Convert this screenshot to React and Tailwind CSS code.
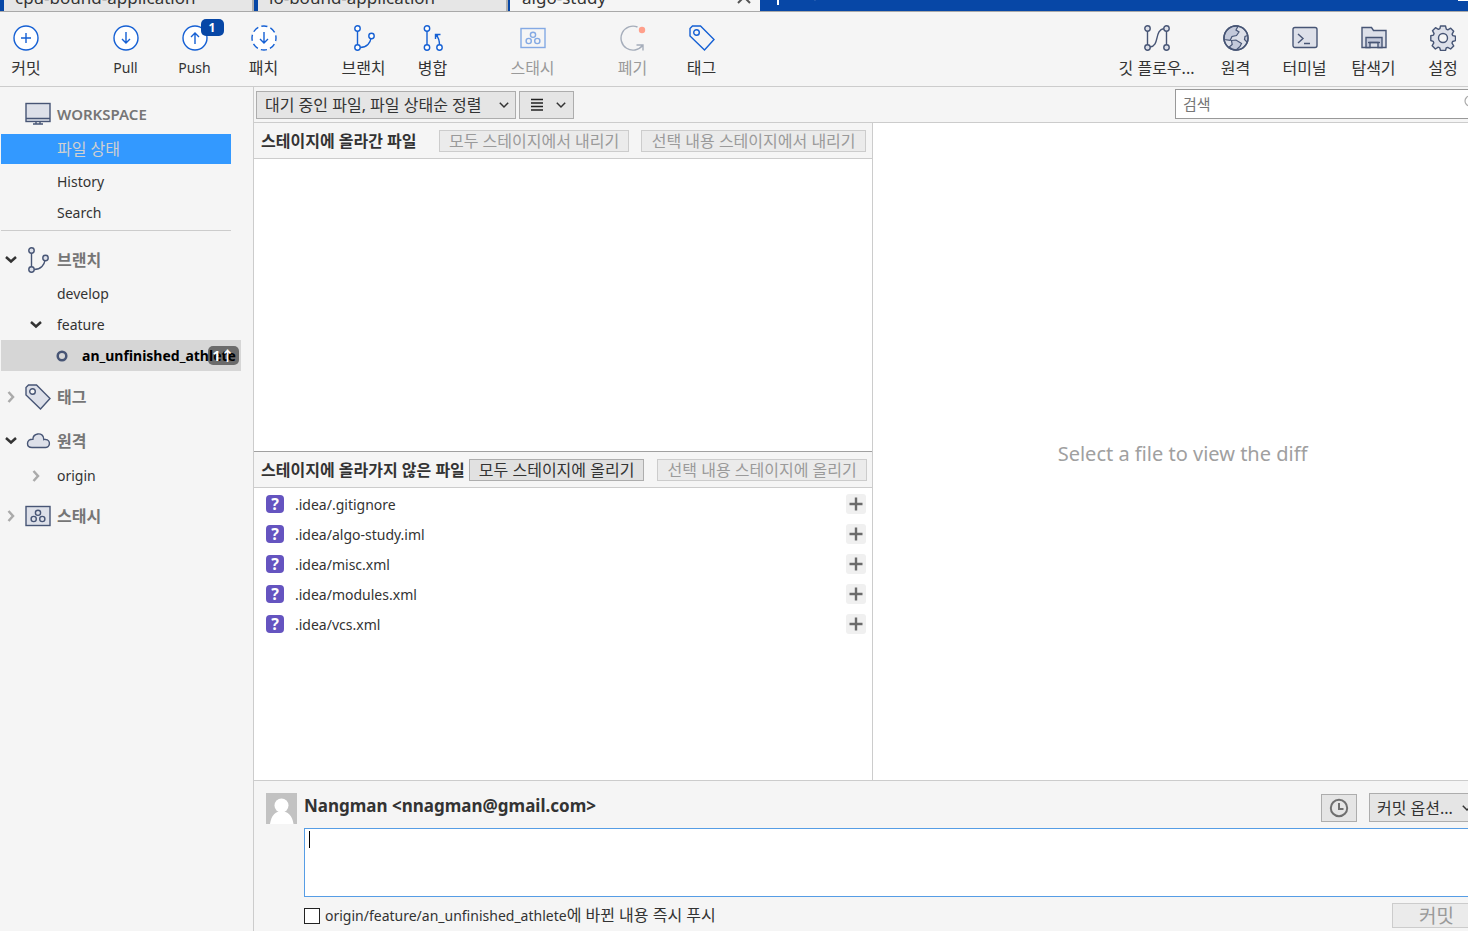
import React from "react";

const NAVY = "#475575";
const FILL = "#dde0e9";

function Svg({ size = 26, children, className = "" }) {
  return (
    <svg
      width={size}
      height={size}
      viewBox={`0 0 ${size} ${size}`}
      fill="none"
      stroke="currentColor"
      strokeWidth="1.4"
      aria-hidden="true"
      className={`shrink-0 ${className}`}
    >
      {children}
    </svg>
  );
}

const CommitIcon = () => (
  <Svg>
    <circle cx="13" cy="13" r="12" fill="#fff" />
    <path d="M8 13h10M13 8v10" />
  </Svg>
);
const PullIcon = () => (
  <Svg>
    <circle cx="13" cy="13" r="12" fill="#fff" />
    <path d="M13 7v11M9 14l4 4 4-4" />
  </Svg>
);
const PushIcon = () => (
  <Svg>
    <circle cx="13" cy="13" r="12" fill="#fff" />
    <path d="M13 19V8M9 12l4-4 4 4" />
  </Svg>
);
const FetchIcon = () => (
  <Svg>
    <circle cx="13" cy="13" r="12" fill="#fff" strokeDasharray="6.2 3.225" strokeDashoffset="3.1" />
    <path d="M13 7v11M9 14l4 4 4-4" />
  </Svg>
);
const BranchIcon = ({ fill = "#fff" }) => (
  <Svg>
    <path d="M6.500 6v14M9 22.500c7 0 10.500-5 11-9.500" />
    <circle cx="6.500" cy="3.500" r="2.700" fill={fill} />
    <circle cx="6.500" cy="22.500" r="2.700" fill={fill} />
    <circle cx="20.500" cy="11" r="2.700" fill={fill} />
  </Svg>
);
const MergeIcon = () => (
  <Svg>
    <path d="M7 6v14M19.500 20c0-4-1-7.500-3.500-10.500M20.500 9.500h-5V14" />
    <path d="M15 9h4.500l-4.500 4.500z" fill="currentColor" stroke="none" />
    <circle cx="7" cy="3.500" r="2.700" fill="#fff" />
    <circle cx="7" cy="22.500" r="2.700" fill="#fff" />
    <circle cx="19.500" cy="22.500" r="2.700" fill="#fff" />
  </Svg>
);
const StashIcon = ({ fill = "none" }) => (
  <Svg>
    <rect x="1" y="3.500" width="24" height="19" fill={fill} />
    <circle cx="13" cy="9.800" r="2.600" />
    <circle cx="8.700" cy="16" r="2.600" />
    <circle cx="17.300" cy="16" r="2.600" />
  </Svg>
);
const DiscardIcon = () => (
  <Svg>
    <path d="M17.500 2A12 12 0 1 0 22.500 20.500M16.500 20h6.500v5.500" />
    <circle cx="22" cy="5" r="3.200" fill="#ff9f8b" stroke="none" />
  </Svg>
);
const TagIcon = ({ fill = "none" }) => (
  <Svg>
    <path d="M1 3.500L3.500 1h8L25 14.500 15.500 25 1 11z" fill={fill} />
    <circle cx="7.500" cy="7.500" r="2.800" fill="#f5f5f5" />
  </Svg>
);
const FlowIcon = () => (
  <Svg>
    <path d="M3.500 6v14M22.500 6v14M6 22c10-1 4-17 14-18.500" />
    <circle cx="3.500" cy="3.500" r="2.700" fill={FILL} />
    <circle cx="3.500" cy="22.500" r="2.700" fill={FILL} />
    <circle cx="22.500" cy="3.500" r="2.700" fill={FILL} />
    <circle cx="22.500" cy="22.500" r="2.700" fill={FILL} />
  </Svg>
);
const GlobeIcon = () => (
  <Svg>
    <circle cx="13" cy="13" r="12" fill={FILL} />
    <path
      d="M6 3.500C2 6.500.8 11 1.200 14.500l6 .8 1.800-3.800 4.500-1L16 7l-3-2 2-3.800C11.500.5 8.500 1.500 6 3.500z"
      fill="#c3c9da"
      strokeWidth="1.200"
    />
    <path
      d="M8.500 15.500L13 15l5.500 3.500-1.500 3-3.500 3.300c-3 .2-5.500-1-7.300-2.800l3-2.500z"
      fill="#c3c9da"
      strokeWidth="1.200"
    />
    <path d="M24.500 10.500l-2.500 1-.5 3 2.500 2.500" fill="#c3c9da" strokeWidth="1.200" />
    <circle cx="13" cy="13" r="12" />
  </Svg>
);
const TerminalIcon = () => (
  <Svg>
    <rect x="1" y="2.500" width="24" height="20" rx="2" fill={FILL} />
    <path d="M6 9l5 4.500L6 18M12 18.500h6" />
  </Svg>
);
const ExplorerIcon = () => (
  <Svg>
    <path d="M1 22.500v-20h9.500l2 3H25v17z" fill={FILL} />
    <path d="M5 22.500V12.500h16v10h-4v-5H9v5z" fill="#c3c9da" />
    <path d="M7 17.500h12" />
  </Svg>
);
const GearIcon = () => (
  <Svg>
    <path
      d="M10.500 1h5l.8 3.200 1.500.7 2.900-1.700 3 3-1.600 2.900.7 1.500 2.700.6v4.500l-2.900.8-.6 1.600 1.700 2.800-3.100 3.100-2.900-1.600-1.500.6-.7 2.500h-5l-.8-2.700-1.500-.6L5.400 24 2.200 20.700l1.600-2.800-.6-1.600L.8 15.500v-4.700l2.700-.7.6-1.500-1.600-2.900 3-3 2.900 1.600 1.500-.7z"
      fill={FILL}
      strokeLinejoin="round"
    />
    <circle cx="13" cy="13" r="4.500" fill="#f5f5f5" />
  </Svg>
);
const MonitorIcon = () => (
  <Svg>
    <rect x="1" y="1.500" width="24" height="18" fill={FILL} />
    <path d="M1 16.500h24M11 20v2M15 20v2M8 22h10" />
  </Svg>
);
const CloudIcon = () => (
  <Svg>
    <path
      d="M7 19.500h13a4 4 0 0 0 .8-8c-1.300-.3-2 0-2 0C19 7 15.500 5.500 12.700 6 9.500 6.500 8 8.800 7.900 11.200 4.500 11 2.500 13 2.500 15.500c0 2.500 2 4 4.500 4z"
      fill={FILL}
    />
  </Svg>
);

const Chevron = ({ dir = "down", className = "" }) => (
  <svg width="12" height="12" viewBox="0 0 12 12" fill="none" stroke="currentColor" aria-hidden="true" className={`shrink-0 ${className}`}>
    <path d={dir === "down" ? "M1 3l5 4.500 5-4.500" : "M3.500 1L8 6l-4.500 5"} strokeWidth="2.500" />
  </svg>
);
const ThinChevron = ({ className = "" }) => (
  <svg width="10" height="10" viewBox="0 0 10 10" fill="none" stroke="#333" strokeWidth="1.500" aria-hidden="true" className={`shrink-0 ${className}`}>
    <path d="M.8 2.800L5 7l4.200-4.200" />
  </svg>
);

function Tool({ icon, label, badge, disabled, latin, width = "w-[69px]", tone = "text-[#1560d4]", dim = "" }) {
  return (
    <button
      type="button"
      disabled={disabled}
      className={`flex shrink-0 flex-col items-center gap-[5px] pt-[13px] ${width}`}
    >
      <span className={`relative ${tone} ${dim}`}>
        {icon}
        {badge && (
          <span className="absolute -top-1.5 left-[19px] flex h-[17px] w-[23px] items-center justify-center rounded-[5px] bg-[#0747a6] text-xs font-bold text-white">
            {badge}
          </span>
        )}
      </span>
      <span
        className={`whitespace-nowrap leading-6 ${latin ? "text-[14px]" : "text-[16px]"} ${
          disabled ? "text-[#9a9a9a]" : "text-[#333]"
        }`}
      >
        {label}
      </span>
    </button>
  );
}

function SmallButton({ children, disabled, className = "" }) {
  return (
    <button
      type="button"
      disabled={disabled}
      className={`h-[22px] shrink-0 whitespace-nowrap border px-[7px] text-[16px] leading-5 ${
        disabled ? "border-[#cccccc] bg-[#ebebeb] text-[#9a9a9a]" : "border-[#adadad] bg-[#e1e1e1] text-[#333]"
      } ${className}`}
    >
      {children}
    </button>
  );
}

function Section({ icon, label, open, latin, className }) {
  return (
    <button type="button" aria-expanded={open} className={`flex w-full items-center text-left ${className}`}>
      <span className="flex w-6 shrink-0 pl-1">
        {open !== undefined && (
          <Chevron dir={open ? "down" : "right"} className={open ? "text-[#333]" : "text-[#aaa]"} />
        )}
      </span>
      <span className="w-8 shrink-0 text-[#475575]">{icon}</span>
      <span className={`font-semibold text-[#767676] ${latin ? "text-[15px]" : "text-[16px]"}`}>{label}</span>
    </button>
  );
}

const files = [".idea/.gitignore", ".idea/algo-study.iml", ".idea/misc.xml", ".idea/modules.xml", ".idea/vcs.xml"];

function Tabs() {
  return (
    <nav className="flex h-3 shrink-0 items-end overflow-hidden border-b border-[#a9a9a9] bg-[#0747a6] pl-1 text-[17px] leading-6 text-[#333]">
      <a href="#cpu" className="w-[250px] shrink-0 border-r-2 border-[#b0b0b0] bg-[#e6e6e6] pb-px pl-[11px]">
        cpu-bound-application
      </a>
      <a href="#io" className="ml-1 w-[250px] shrink-0 border-r-2 border-[#b0b0b0] bg-[#e6e6e6] pb-px pl-[11px]">
        io-bound-application
      </a>
      <a
        href="#algo"
        aria-current="page"
        className="-mb-px ml-0.5 flex w-[250px] shrink-0 items-end justify-between bg-[#f5f5f5] pb-[2px] pl-3 pr-2"
      >
        algo-study
        <svg width="16" height="16" viewBox="0 0 16 16" stroke="#555" strokeWidth="2" aria-hidden="true" className="mb-[5px]">
          <path d="M2 2l12 12M14 2L2 14" />
        </svg>
      </a>
      <svg width="70" height="20" viewBox="0 0 70 20" stroke="#fff" strokeWidth="2" fill="none" aria-hidden="true" className="mb-0.5">
        <path d="M18 0v16M10 7h16M50 5l5 5 5-5" />
      </svg>
      <span className="ml-auto h-3 w-2.5 shrink-0">
        <span className="block h-0.5 bg-white" />
      </span>
    </nav>
  );
}

function Toolbar() {
  const navy = "text-[#475575]";
  return (
    <header className="flex h-[75px] shrink-0 items-start justify-between border-b border-[#cccccc]">
      <div className="flex">
        <Tool icon={<CommitIcon />} label="커밋" width="w-[52px]" />
        <div className="ml-[39px] flex">
          <Tool icon={<PullIcon />} label="Pull" latin />
          <Tool icon={<PushIcon />} label="Push" badge="1" latin />
          <Tool icon={<FetchIcon />} label="패치" />
        </div>
        <div className="ml-[31px] flex">
          <Tool icon={<BranchIcon />} label="브랜치" />
          <Tool icon={<MergeIcon />} label="병합" />
        </div>
        <div className="ml-[31px] flex">
          <Tool icon={<StashIcon />} label="스태시" disabled dim="opacity-50" />
        </div>
        <div className="ml-[31px] flex">
          <Tool icon={<DiscardIcon />} label="폐기" disabled tone="text-[#a5adba]" />
          <Tool icon={<TagIcon />} label="태그" />
        </div>
      </div>
      <div className="flex">
        <Tool icon={<FlowIcon />} label="깃 플로우..." width="w-[89px]" tone={navy} />
        <Tool icon={<GlobeIcon />} label="원격" tone={navy} />
        <Tool icon={<TerminalIcon />} label="터미널" tone={navy} />
        <Tool icon={<ExplorerIcon />} label="탐색기" tone={navy} />
        <Tool icon={<GearIcon />} label="설정" width="ml-2.5 w-[50px]" tone={navy} />
      </div>
    </header>
  );
}

function Sidebar() {
  return (
    <aside className="w-[253px] shrink-0 pl-px text-[14px] text-[#333]">
      <div className="mr-[22px] border-b border-[#cccccc] pb-0.5">
        <Section icon={<MonitorIcon />} label="WORKSPACE" latin className="h-[47px] pt-2" />
        <a href="#status" className="flex h-[30px] items-center bg-[#3399ff] pl-14 text-[16px] text-[#d0d0d0]">
          파일 상태
        </a>
        <a href="#history" className="mt-0.5 flex h-[31px] items-center pl-14">
          History
        </a>
        <a href="#search" className="flex h-[31px] items-center pl-14">
          Search
        </a>
      </div>
      <Section icon={<BranchIcon fill={FILL} />} label="브랜치" open className="h-[47px] pt-2.5" />
      <a href="#develop" className="flex h-[31px] items-center pl-14">
        develop
      </a>
      <button type="button" aria-expanded="true" className="flex h-[31px] items-center">
        <span className="w-14 pl-[29px]">
          <Chevron />
        </span>
        feature
      </button>
      <a
        href="#athlete"
        className="relative mr-3 flex h-[31px] items-center bg-[#d6d6d6] pl-[55px] font-bold text-black"
      >
        <svg width="12" height="12" viewBox="0 0 12 12" fill="none" stroke={NAVY} strokeWidth="2.500" aria-hidden="true" className="mr-3.5 shrink-0">
          <circle cx="6" cy="6" r="4.300" />
        </svg>
        <span className="text-[14px]">an_unfinished_athlete</span>
        <span className="absolute right-0.5 top-1.5 flex h-[19px] w-[31px] items-center justify-center rounded-[5px] bg-black/50 text-[14px] text-white">
          1↑
        </span>
      </a>
      <Section icon={<TagIcon fill={FILL} />} label="태그" open={false} className="h-[51px]" />
      <Section icon={<CloudIcon />} label="원격" open className="h-[38px]" />
      <button type="button" aria-expanded="false" className="flex h-[31px] items-center">
        <span className="w-14 pl-[29px]">
          <Chevron dir="right" className="text-[#aaa]" />
        </span>
        origin
      </button>
      <Section icon={<StashIcon fill={FILL} />} label="스태시" open={false} className="h-[50px]" />
    </aside>
  );
}

function FilterBar() {
  return (
    <div className="flex shrink-0 items-start justify-between border-b border-[#cccccc] pb-[3px] pl-0.5 pt-0.5">
      <div className="flex gap-[3px] pt-0.5">
        <div className="relative flex">
          <select
            aria-label="파일 정렬"
            className="h-7 w-[260px] appearance-none border border-[#adadad] bg-[#e5e5e5] pl-2 text-[16px] text-[#333]"
          >
            <option>대기 중인 파일, 파일 상태순 정렬</option>
          </select>
          <ThinChevron className="pointer-events-none absolute right-[7px] top-[9px]" />
        </div>
        <button
          type="button"
          aria-label="보기 방식"
          className="flex h-7 w-[55px] items-center justify-between border border-[#adadad] bg-[#e5e5e5] pl-[11px] pr-[7px]"
        >
          <svg width="12" height="14" viewBox="0 0 12 14" stroke="#222" strokeWidth="1.300" aria-hidden="true">
            <path d="M0 1.500h12M0 5h12M0 8.500h12M0 12h12" />
          </svg>
          <ThinChevron />
        </button>
      </div>
      <div className="relative">
        <input
          type="search"
          aria-label="검색"
          placeholder="검색"
          className="block h-[30px] w-[293px] border border-r-0 border-[#999] bg-white pl-[7px] text-[15px] placeholder:text-[#767676]"
        />
        <svg width="4" height="14" viewBox="0 0 4 14" fill="none" stroke="#aaa" strokeWidth="1.200" aria-hidden="true" className="absolute right-0 top-1.5">
          <circle cx="6" cy="6" r="5" />
        </svg>
      </div>
    </div>
  );
}

function Stages() {
  return (
    <div className="flex w-[51%] shrink-0 flex-col border-r border-[#cccccc]">
      <section className="flex flex-1 flex-col">
        <div className="flex h-9 shrink-0 items-center justify-between border-b border-[#cccccc] bg-[#f5f5f5] pl-[7px] pr-1.5">
          <h2 className="w-[178px] shrink-0 whitespace-nowrap text-[16px] font-bold text-[#333]">스테이지에 올라간 파일</h2>
          <div className="flex gap-3">
            <SmallButton disabled className="w-[190px]">모두 스테이지에서 내리기</SmallButton>
            <SmallButton disabled className="w-[225px]">선택 내용 스테이지에서 내리기</SmallButton>
          </div>
        </div>
      </section>
      <section className="flex flex-1 flex-col border-t border-[#a0a0a0]">
        <div className="flex h-9 shrink-0 items-center justify-between border-b border-[#cccccc] bg-[#f5f5f5] pl-[7px] pr-[5px]">
          <h2 className="w-[208px] whitespace-nowrap text-[16px] font-bold text-[#333]">스테이지에 올라가지 않은 파일</h2>
          <div className="relative flex gap-[13px]">
            <SmallButton className="w-[175px]">모두 스테이지에 올리기</SmallButton>
            <SmallButton disabled className="w-[210px]">선택 내용 스테이지에 올리기</SmallButton>
          </div>
        </div>
        <ul className="pt-px">
          {files.map((name) => (
            <li key={name} className="flex h-[30px] items-center pl-3 pr-1.5 text-[14px] text-[#333]">
              <span className="mr-[11px] flex size-[18px] items-center justify-center rounded-[4px] bg-[#6554c0] text-[16px] font-bold text-white">
                ?
              </span>
              <span className="flex-1">{name}</span>
              <button
                type="button"
                aria-label={`${name} 스테이지에 올리기`}
                className="flex size-5 items-center justify-center rounded-[3px] bg-[#f0f0f0]"
              >
                <svg width="14" height="14" viewBox="0 0 14 14" stroke="#6b6b6b" strokeWidth="2.400" aria-hidden="true">
                  <path d="M.5 7h13M7 .5v13" />
                </svg>
              </button>
            </li>
          ))}
        </ul>
      </section>
    </div>
  );
}

function CommitPanel() {
  return (
    <form className="flex h-[151px] shrink-0 gap-[7px] border-t border-[#cccccc] bg-[#f5f5f5] pl-3 pt-3">
      <svg width="31" height="31" viewBox="0 0 31 31" aria-hidden="true" className="shrink-0">
        <path d="M0 0h31v31H0z" fill="#c2c2c2" />
        <circle cx="15.500" cy="12.500" r="7" fill="#fff" />
        <path d="M4 31c1-8 5.500-13 11.500-13S26.500 23 27.500 31z" fill="#fff" />
      </svg>
      <div className="flex min-w-0 flex-1 flex-col">
        <div className="flex items-start justify-between">
          <p className="text-[17px] font-bold leading-[26px] text-[#333]">Nangman &lt;nnagman@gmail.com&gt;</p>
          <div className="flex gap-3">
            <button
              type="button"
              aria-label="최근 메시지"
              className="mt-px flex h-7 w-9 items-center justify-center border border-[#adadad] bg-[#e5e5e5]"
            >
              <svg width="20" height="20" viewBox="0 0 20 20" fill="none" stroke="#6f6f6f" strokeWidth="2" aria-hidden="true">
                <circle cx="10" cy="10" r="8.200" />
                <path d="M10 5v6h4.500" />
              </svg>
            </button>
            <button
              type="button"
              aria-haspopup="menu"
              className="flex h-[29px] w-[99px] items-center justify-between whitespace-nowrap border border-r-0 border-[#adadad] bg-[#e5e5e5] pl-[7px] text-[16px] text-[#333]"
            >
              커밋 옵션...
              <ThinChevron className="-mr-1" />
            </button>
          </div>
        </div>
        <div className="relative mt-1.5">
          <textarea
            aria-label="커밋 메시지"
            className="block h-[69px] w-full resize-none border border-r-0 border-[#569de5] bg-white px-1 text-[14px] outline-none"
          />
          <span className="absolute left-[5px] top-[3px] h-[17px] w-px bg-black" />
        </div>
        <div className="flex items-start justify-between pt-1.5">
          <label className="flex items-center gap-[5px] text-[14px] leading-6 text-[#333]">
            <input type="checkbox" className="size-4 appearance-none border border-[#222] bg-white" />
            <span>
              origin/feature/an_unfinished_athlete<span className="text-[16px]">에 바뀐 내용 즉시 푸시</span>
            </span>
          </label>
          <button
            type="submit"
            disabled
            className="h-[25px] w-[76px] border border-r-0 border-[#cccccc] bg-[#ebebeb] pl-3 text-[19px] leading-5 text-[#9a9a9a]"
          >
            커밋
          </button>
        </div>
      </div>
    </form>
  );
}

export default function App() {
  return (
    <div className="flex h-screen flex-col overflow-hidden bg-[#f5f5f5] font-['Noto_Sans','Noto_Sans_CJK_KR',sans-serif]">
      <Tabs />
      <Toolbar />
      <div className="flex min-h-0 flex-1">
        <Sidebar />
        <main className="flex min-w-0 flex-1 flex-col border-l border-[#cccccc]">
          <FilterBar />
          <div className="flex min-h-0 flex-1 bg-white">
            <Stages />
            <div className="flex flex-1 items-center justify-center whitespace-nowrap pl-6 pt-1 text-[20px] text-[#a0a0a0]">
              Select a file to view the diff
            </div>
          </div>
          <CommitPanel />
        </main>
      </div>
    </div>
  );
}
